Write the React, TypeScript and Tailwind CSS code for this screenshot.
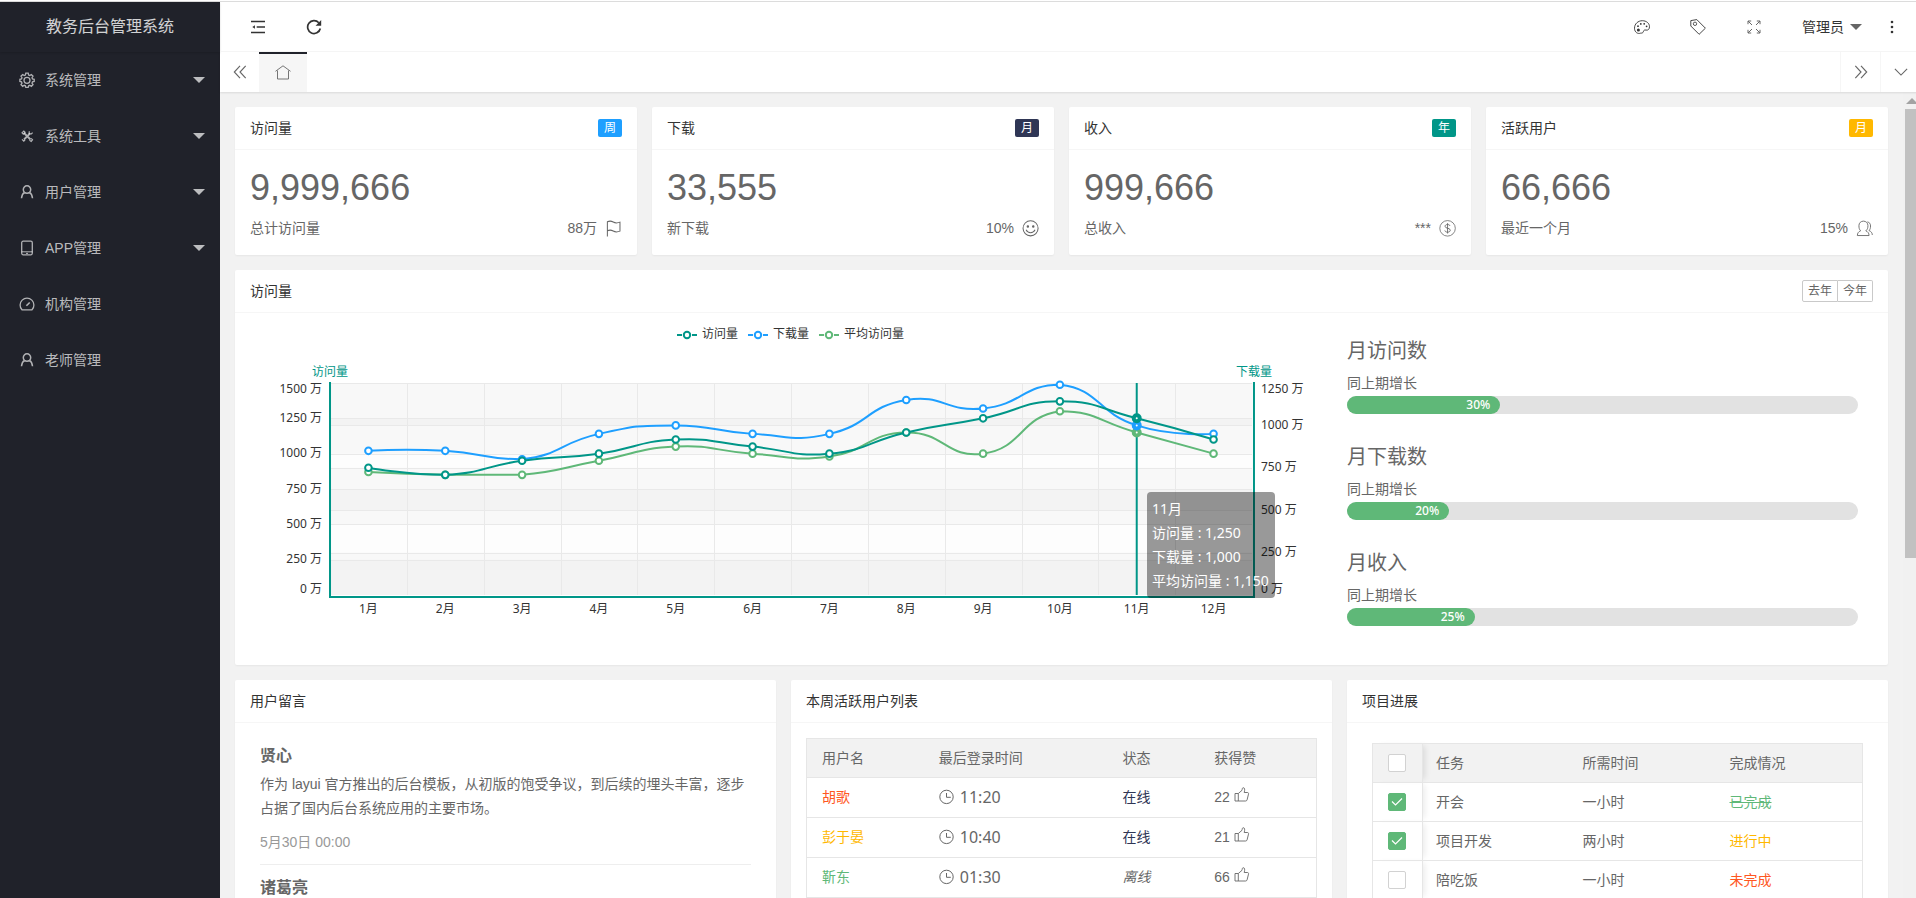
import { useState, type ReactNode } from "react";

const MENU = [
  { label: '系统管理', icon: 'gear', sub: true },
  { label: '系统工具', icon: 'tools', sub: true },
  { label: '用户管理', icon: 'user', sub: true },
  { label: 'APP管理', icon: 'phone', sub: true },
  { label: '机构管理', icon: 'dash', sub: false },
  { label: '老师管理', icon: 'user', sub: false },
];

const STATS = [
  { title: '访问量', badge: '周', color: 'bg-[#1E9FFF]', value: '9,999,666', label: '总计访问量', extra: '88万', icon: 'flag' },
  { title: '下载', badge: '月', color: 'bg-[#2F3655]', value: '33,555', label: '新下载', extra: '10%', icon: 'smile' },
  { title: '收入', badge: '年', color: 'bg-[#009688]', value: '999,666', label: '总收入', extra: '***', icon: 'dollar' },
  { title: '活跃用户', badge: '月', color: 'bg-[#FFB800]', value: '66,666', label: '最近一个月', extra: '15%', icon: 'users' },
];

const PROGRESS = [{ title: '月访问数', val: 30 }, { title: '月下载数', val: 20 }, { title: '月收入', val: 25 }];

const USERS = [
  { name: '胡歌', color: 'text-[#FF5722]', time: '11:20', online: true, likes: 22 },
  { name: '彭于晏', color: 'text-[#FFB800]', time: '10:40', online: true, likes: 21 },
  { name: '靳东', color: 'text-[#5FB878]', time: '01:30', online: false, likes: 66 },
];

const TASKS = [
  { name: '开会', time: '一小时', state: '已完成', cls: 'text-[#5FB878] line-through', done: true },
  { name: '项目开发', time: '两小时', state: '进行中', cls: 'text-[#FFB800]', done: true },
  { name: '陪吃饭', time: '一小时', state: '未完成', cls: 'text-[#FF5722]', done: false },
];

const ICONS: Record<string, ReactNode> = {
  gear: (
    <>
      <path d="M6.800 1.200h2.400l.4 1.800 1.200.5 1.500-1 1.700 1.700-1 1.500.5 1.200 1.700.4v2.200l-1.700.4-.5 1.200 1 1.500-1.700 1.700-1.500-1-1.200.5-.4 1.500H6.800l-.4-1.500-1.200-.5-1.500 1L2 12.600l1-1.500-.5-1.200L.9 9.500V7.300l1.600-.4L3 5.700 2 4.200l1.700-1.700 1.500 1 1.200-.5z" strokeWidth="1.300" />
      <circle cx="8" cy="8.300" r="3" strokeWidth="1.300" />
    </>
  ),
  tools: (
    <>
      <path d="M5 5l6.500 6.500M11 5.500l-6 6" strokeWidth="1.800" />
      <path d="M3 4.800l1.800-1.800 1.300 1.300-1.800 1.800zM10.300 3.300l-.2 2.300 2.300.3 1.200-1.300M3 11.300l1.800 1.800 1.300-1.300M10.500 12.200l1.700 1.200 1.300-1.700-1.300-1.300" strokeWidth="1.200" />
    </>
  ),
  user: <path d="M5.500 8.300a3.700 3.700 0 1 1 5 0M5.500 8.300C3.600 9.500 2.700 11.600 2.500 14.300M10.500 8.300c1.900 1.200 2.800 3.300 3 6M5.500 8.300c1.500 1.100 3.500 1.100 5 0" strokeWidth="1.500" />,
  phone: (
    <>
      <rect x="2.700" y="1.200" width="10.600" height="13.600" rx="1.500" strokeWidth="1.300" />
      <path d="M2.700 11.800h10.600M7 13.400h2" />
    </>
  ),
  dash: (
    <>
      <path d="M3 13.800A6.900 6.900 0 1 1 13 13.800z" strokeWidth="1.300" />
      <path d="M7.400 9.800l3.300-3.300" strokeWidth="1.600" />
    </>
  ),
  flag: <path d="M3 15.500V2.500c2-1 3.500-.8 5.200.2s3.600 1.100 6 .1v8c-2.400 1-4.300.9-6-.1s-3.200-1.200-5.200-.2" strokeWidth=".9" />,
  smile: (
    <>
      <circle cx="8.500" cy="8.300" r="6.700" strokeWidth=".9" />
      <circle cx="6.100" cy="6.600" r=".6" fill="currentColor" />
      <circle cx="10.900" cy="6.600" r=".6" fill="currentColor" />
      <path d="M4.500 9.600c1.700 3.400 6.300 3.400 8 0" strokeWidth=".9" />
    </>
  ),
  dollar: (
    <>
      <circle cx="8.500" cy="8.300" r="6.900" strokeWidth=".7" />
      <path d="M10.700 6.200C10.400 5.300 9.600 4.900 8.500 4.900c-1.300 0-2.200.6-2.200 1.600 0 2.400 4.600 1 4.600 3.500 0 1-1 1.700-2.400 1.700-1.300 0-2.200-.5-2.400-1.500M8.500 3.700v9.200" strokeWidth=".8" />
    </>
  ),
  users: (
    <path d="M5 10.500C3.100 11.300 2.100 12.600 2.100 14.700h10.400c0-2.100-1-3.400-2.900-4.200C11.100 9.300 11.500 7.900 11.500 5.900 11.500 3.500 9.800 1.900 7.500 1.900S3.500 3.500 3.500 5.900c0 2 .3 3.400 1.500 4.600M11 2.600c1.900.4 2.800 1.600 2.800 3.600 0 1.900-.4 3-1.300 4.100 1.900.8 2.800 2 2.900 3.900" strokeWidth=".8" />
  ),
  indent: (
    <>
      <path d="M0 1.700h16M6.500 8H16M0 14.300h16" strokeWidth="1.600" />
      <path d="M1.500 8l3-2v4z" fill="currentColor" stroke="none" />
    </>
  ),
  refresh: (
    <>
      <path d="M14.300 9.500A6.400 6.400 0 1 1 12.800 3.800" strokeWidth="1.700" />
      <path d="M15.200 1v5.800H9.600z" fill="currentColor" stroke="none" />
    </>
  ),
  left: <path d="M8 1L1.500 8 8 15M14.500 1L8 8l6.500 7" strokeWidth="1.300" />,
  right: <path d="M8 1l6.500 7L8 15M1.500 1L8 8l-6.500 7" strokeWidth="1.300" />,
  down: <path d="M1 4.500L8 11.500l7-7" strokeWidth="1.300" />,
  home: <path d="M.5 6.300L8 .8l7.500 5.500M2.500 5.500V14h11V5.500" strokeWidth=".9" />,
  palette: (
    <>
      <path d="M6.400 14.200c-2.600 1-5.900-.9-5.900-5C.5 4.900 4 1.700 8.300 1.700c4.100 0 7.200 2.600 7.200 6 0 2.500-1.600 3.800-3.400 3.400-1.600-.4-2.600.2-2.700 1.500-.1 1.200-1.600 1.600-3 1.600z" strokeWidth=".9" />
      <circle cx="4.400" cy="11" r="1.500" fill="currentColor" stroke="none" />
      <circle cx="4" cy="7.200" r=".9" fill="currentColor" stroke="none" />
      <circle cx="6.800" cy="4.900" r=".9" fill="currentColor" stroke="none" />
      <circle cx="10.200" cy="4.800" r=".9" fill="currentColor" stroke="none" />
      <circle cx="12.600" cy="7.300" r=".9" fill="currentColor" stroke="none" />
    </>
  ),
  tag: (
    <>
      <path d="M.8 1.600L6.800.6l8.600 8.600-6.300 6.100L.8 7z" strokeWidth=".9" />
      <circle cx="5" cy="4.800" r="1.700" strokeWidth=".8" />
    </>
  ),
  full: (
    <path d="M2 5.200V2h3.200M2 2l4 4M10.800 2H14v3.200M14 2l-4 4M2 10.800V14h3.200M2 14l4-4M14 10.800V14h-3.200M14 14l-4-4" strokeWidth="1" />
  ),
  clock: <path d="M7.500 1.200a6.700 6.700 0 1 0 0 13.400A6.700 6.700 0 1 0 7.500 1.200zM7.500 4v4.300h4.300" />,
  thumb: <path d="M4.300 6.500V14M1 6.500h3.300L8 3.300C8.300 2 8.200.7 9.300.7c1.500 0 1.700 2.200.9 4.800H13.500c1 0 1.200.8 1 1.600l-1.400 5.700c-.2.800-.7 1.200-1.500 1.200H1z" strokeWidth=".9" />,
};

function Icon({ name, className = 'w-4 h-4' }: { name: string; className?: string }) {
  return (
    <svg viewBox="0 0 16 16" fill="none" stroke="currentColor" className={`shrink-0 ${className}`}>
      {ICONS[name]}
    </svg>
  );
}

function Caret({ className = '' }: { className?: string }) {
  return (
    <svg viewBox="0 0 12 6" fill="currentColor" className={`w-3 h-1.5 ${className}`}>
      <path d="M0 0h12L6 6z" />
    </svg>
  );
}

function Card({ title, right, children }: { title: string; right?: ReactNode; children: ReactNode }) {
  return (
    <section className="bg-white rounded-xs shadow-[0_1px_2px_rgba(0,0,0,0.05)]">
      <div className="flex items-center justify-between h-[43px] px-[15px] border-b border-[#f6f6f6]">
        <h2 className="text-[#333]">{title}</h2>
        {right}
      </div>
      {children}
    </section>
  );
}

// Chart geometry
const W = 1082;
const X0 = 80, X1 = 1002, Y0 = 60, Y1 = 272;
const STEP = (X1 - X0) / 12;
const ACTIVE = 10;

const SERIES = [
  { name: '平均访问量', color: '#5FB878', max: 1500, lx: 569, data: [870, 850, 850, 950, 1050, 1000, 980, 1150, 1000, 1300, 1150, 1000] },
  { name: '下载量', color: '#1E9FFF', max: 1250, lx: 498, data: [850, 850, 800, 950, 1000, 950, 950, 1150, 1100, 1240, 1000, 950] },
  { name: '访问量', color: '#009688', max: 1500, lx: 427, data: [900, 850, 950, 1000, 1100, 1050, 1000, 1150, 1250, 1370, 1250, 1100] },
];

type Pt = [number, number];

const toPoints = (data: number[], max: number): Pt[] =>
  data.map((v, i) => [X0 + STEP * (i + 0.5), Y1 - (v / max) * (Y1 - Y0)]);

// Bezier smoothing, control points kept inside the series' own bounds
function smooth(pts: Pt[]) {
  const ys = pts.map(p => p[1]);
  const lo = Math.min(...ys), hi = Math.max(...ys);
  const clamp = (y: number) => Math.max(lo, Math.min(hi, y));
  const cps = pts.map((p, i) => {
    if (i === 0 || i === pts.length - 1) return [p, p];
    const a = pts[i - 1], b = pts[i + 1];
    const vx = (b[0] - a[0]) * 0.5, vy = (b[1] - a[1]) * 0.5;
    const d0 = Math.hypot(p[0] - a[0], p[1] - a[1]), d1 = Math.hypot(p[0] - b[0], p[1] - b[1]);
    const k0 = d0 / (d0 + d1), k1 = d1 / (d0 + d1);
    return [[p[0] - vx * k0, clamp(p[1] - vy * k0)], [p[0] + vx * k1, clamp(p[1] + vy * k1)]];
  });
  let d = `M${pts[0]}`;
  for (let i = 1; i < pts.length; i++) d += `C${cps[i - 1][1]} ${cps[i][0]} ${pts[i]}`;
  return d;
}

// The labels at both ends of an axis are pulled inside it
const labelY = (i: number, n: number) => {
  const y = Math.floor(Y1 - ((Y1 - Y0) * i) / n);
  return i === 0 ? y - 6 : i === n ? y + 6 : y;
};

function Chart() {
  const h = Y1 - Y0;
  const ax = X0 + STEP * (ACTIVE + 0.5);
  return (
    <div className="relative">
      <svg viewBox={`0 0 ${W} 332`} className="w-full block font-['Noto_Sans','Noto_Sans_CJK_SC',sans-serif]" fontSize="12" fill="#333">
        <rect x={X0} y={Y0} width={X1 - X0} height={h} fill="#fdfdfd" />
        {[6, 5].map(n => Array.from({ length: Math.ceil(n / 2) }, (_, i) => (
          <rect key={`${n}-${i}`} x={X0} y={Y1 - (h * (2 * i + 1)) / n} width={X1 - X0} height={h / n} fill="rgba(160,160,160,0.055)" />
        )))}
        <g stroke="#e9e9e9" shapeRendering="crispEdges">
          {[6, 5].map(n => Array.from({ length: n }, (_, i) => {
            const y = Math.round(Y0 + (h * i) / n) + 0.5;
            return <line key={`${n}-${i}`} x1={X0} x2={X1} y1={y} y2={y} />;
          }))}
          {Array.from({ length: 11 }, (_, i) => {
            const x = Math.round(X0 + STEP * (i + 1)) + 0.5;
            return <line key={i} x1={x} x2={x} y1={Y0} y2={Y1} />;
          })}
        </g>
        <path d={`M${X0} ${Y0 - 1}V${Y1 + 2}H${X1 + 2}V${Y0 - 1}`} fill="none" stroke="#009688" strokeWidth="2" />
        <line x1={ax} x2={ax} y1={Y0} y2={Y1} stroke="#009688" strokeWidth="2" />

        {SERIES.map(s => {
          const pts = toPoints(s.data, s.max);
          return (
            <g key={s.name} stroke={s.color} strokeWidth="2">
              <path d={smooth(pts)} fill="none" />
              {pts.map(([x, y], i) => (
                <circle key={i} cx={x} cy={y} r={i === ACTIVE ? 3 : 3.3} fill="#fff" strokeWidth={i === ACTIVE ? 4 : 2} />
              ))}
              <path d={`M${s.lx} 12h5M${s.lx + 15} 12h5`} />
              <circle cx={s.lx + 10} cy={12} r="3.2" fill="#fff" />
            </g>
          );
        })}
        {SERIES.map(s => <text key={s.name} x={s.lx + 25} y="15">{s.name}</text>)}

        <g fill="#009688" textAnchor="middle">
          <text x={X0} y="53">访问量</text>
          <text x={X1 + 2} y="53">下载量</text>
        </g>
        {Array.from({ length: 7 }, (_, i) => (
          <text key={i} x={X0 - 8} y={labelY(i, 6) + 4} textAnchor="end">{i * 250} 万</text>
        ))}
        {Array.from({ length: 6 }, (_, i) => (
          <text key={i} x={X1 + 9} y={labelY(i, 5) + 4}>{i * 250} 万</text>
        ))}
        {Array.from({ length: 12 }, (_, i) => (
          <text key={i} x={X0 + STEP * (i + 0.5)} y="290" textAnchor="middle">{i + 1}月</text>
        ))}
      </svg>
      {/* Tooltip */}
      <div className="absolute left-[897px] top-[169px] p-[5px] w-32 rounded bg-black/40 text-white text-sm leading-6 whitespace-nowrap font-['Noto_Sans','Noto_Sans_CJK_SC',sans-serif]">
        <div>11月</div>
        <div>访问量 : 1,250</div>
        <div>下载量 : 1,000</div>
        <div>平均访问量 : 1,150</div>
      </div>
    </div>
  );
}

function Checkbox({ label, checked, onChange }: { label: string; checked: boolean; onChange: () => void }) {
  return (
    <label className="relative block w-[18px] h-[18px]">
      <input type="checkbox" aria-label={label} checked={checked} onChange={onChange}
        className="block appearance-none w-[18px] h-[18px] rounded-xs border border-[#d2d2d2] bg-white checked:border-[#5FB878] checked:bg-[#5FB878]" />
      {checked && (
        <svg viewBox="0 0 18 18" fill="none" stroke="#fff" strokeWidth="1.2" className="absolute inset-0 pointer-events-none">
          <path d="M4 8.500L7.500 12 14 5.500" />
        </svg>
      )}
    </label>
  );
}

export default function App() {
  const [done, setDone] = useState(TASKS.map(t => t.done));
  const allDone = done.every(Boolean);

  return (
    <div className="h-screen overflow-hidden flex flex-col bg-white text-sm text-[#666] font-['Liberation_Sans','Noto_Sans_CJK_SC',sans-serif]">
      <div className="h-0.5 shrink-0 border-b border-[#dcdcdc]" />
      <div className="flex flex-1 min-h-0">
        {/* Sidebar */}
        <aside className="w-[220px] shrink-0 bg-[#20222A] text-white/70">
          <div className="h-[50px] flex items-center justify-center text-base text-white/80 shadow-[0_1px_2px_rgba(0,0,0,0.15)]">教务后台管理系统</div>
          <nav>
            {MENU.map(m => (
              <a key={m.label} href="#" className="flex items-center h-14 pl-[19px] pr-[15px]">
                <Icon name={m.icon} className="w-4 h-4 text-white/65" />
                <span className="ml-2.5 flex-1">{m.label}</span>
                {m.sub && <Caret />}
              </a>
            ))}
          </nav>
        </aside>

        <div className="flex-1 min-w-0 flex flex-col -mr-1">
          {/* Header */}
          <header className="h-[50px] shrink-0 flex items-center justify-between border-b border-[#f6f6f6] text-[#333]">
            <div className="flex items-center pl-[30px] gap-10">
              <button aria-label="侧边伸缩"><Icon name="indent" className="block w-4 h-3.5" /></button>
              <button aria-label="刷新"><Icon name="refresh" className="block w-4 h-4" /></button>
            </div>
            <div className="flex items-center pr-[26px]">
              <button aria-label="主题" className="w-14"><Icon name="palette" className="block w-4 h-4 mx-auto" /></button>
              <button aria-label="便签" className="w-14"><Icon name="tag" className="block w-4 h-4 mx-auto" /></button>
              <button aria-label="全屏" className="w-14 text-[#666]"><Icon name="full" className="block w-4 h-4 mx-auto" /></button>
              <button className="flex items-center gap-1.5 ml-5">管理员<Caret className="text-[#666]" /></button>
              <button aria-label="更多" className="ml-7">
                <svg viewBox="0 0 4 14" fill="currentColor" className="block w-1 h-3.5">
                  <circle cx="2" cy="2" r="1.300" /><circle cx="2" cy="7" r="1.300" /><circle cx="2" cy="12" r="1.300" />
                </svg>
              </button>
            </div>
          </header>

          {/* Page tabs */}
          <div className="relative h-10 shrink-0 flex shadow-[0_1px_2px_rgba(0,0,0,0.1)]">
            <button aria-label="向左" className="w-[39px] grid place-items-center"><Icon name="left" className="w-3.5 h-3.5" /></button>
            <button aria-label="主页" className="w-12 grid place-items-center bg-[#f6f6f6] border-t-2 border-[#20222A]"><Icon name="home" /></button>
            <div className="flex-1" />
            <button aria-label="向右" className="w-10 grid place-items-center border-l border-[#f6f6f6]"><Icon name="right" className="w-3.5 h-3.5" /></button>
            <button aria-label="标签操作" className="w-10 grid place-items-center border-l border-[#f6f6f6]"><Icon name="down" className="w-3.5 h-3.5" /></button>
          </div>

          <div className="flex flex-1 min-h-0 bg-[#f2f2f2]">
            <main className="flex-1 min-w-0 p-[15px] overflow-hidden space-y-[15px]">
              {/* Stats */}
              <div className="grid grid-cols-4 gap-[15px]">
                {STATS.map(s => (
                  <Card key={s.title} title={s.title} right={<span className={`${s.color} rounded-xs px-1.5 text-xs leading-[18px] text-white`}>{s.badge}</span>}>
                    <div className="p-[15px]">
                      <p className="h-[51px] pt-[5px] text-4xl leading-9">{s.value}</p>
                      <p className="flex items-center leading-6">
                        <span className="flex-1">{s.label}</span>
                        {s.extra}
                        <Icon name={s.icon} className="ml-[7px] w-[18px] h-[18px]" />
                      </p>
                    </div>
                  </Card>
                ))}
              </div>

              {/* Chart and growth */}
              <Card title="访问量" right={
                <div className="flex text-xs leading-5">
                  <button className="border border-[#c9c9c9] rounded-l-xs px-[5px]">去年</button>
                  <button className="border border-l-0 border-[#c9c9c9] rounded-r-xs px-[5px]">今年</button>
                </div>
              }>
                <div className="flex px-[15px] py-2.5">
                  <div className="w-2/3"><Chart /></div>
                  <div className="w-1/3 px-[15px] pt-[13px] space-y-7">
                    {PROGRESS.map(p => (
                      <div key={p.title}>
                        <h3 className="text-xl leading-[30px] mb-[5px]">{p.title}</h3>
                        <p className="leading-[25px]">同上期增长</p>
                        <div className="h-[18px] rounded-full bg-[#e2e2e2]">
                          <div className="h-[18px] rounded-full bg-[#5FB878] pr-2.5 text-right text-xs leading-[18px] text-white font-medium font-['Noto_Sans',sans-serif]" style={{ width: `${p.val}%` }}>{p.val}%</div>
                        </div>
                      </div>
                    ))}
                  </div>
                </div>
              </Card>

              <div className="grid grid-cols-3 gap-[15px]">
                {/* Messages */}
                <Card title="用户留言">
                  <ul className="px-[25px] pt-2.5">
                    <li className="pt-[11px] pb-2.5 border-b border-[#eee]">
                      <h3 className="text-base leading-6 font-bold">贤心</h3>
                      <p className="mt-1 leading-6">作为 layui 官方推出的后台模板，从初版的饱受争议，到后续的埋头丰富，逐步占据了国内后台系统应用的主要市场。</p>
                      <p className="mt-2.5 leading-6 text-[#999]">5月30日 00:00</p>
                    </li>
                    <li className="pt-[11px] pb-2.5">
                      <h3 className="text-base leading-6 font-bold">诸葛亮</h3>
                    </li>
                  </ul>
                </Card>

                {/* Active users */}
                <Card title="本周活跃用户列表">
                  <div className="p-[15px]">
                    <table className="w-full table-fixed border-collapse border border-[#e6e6e6] text-left">
                      <thead className="bg-[#f2f2f2]">
                        <tr className="h-[39px]">
                          <th className="w-[23%] px-[15px] font-normal">用户名</th>
                          <th className="w-[36%] px-[15px] font-normal">最后登录时间</th>
                          <th className="w-[18%] px-[15px] font-normal">状态</th>
                          <th className="px-[15px] font-normal">获得赞</th>
                        </tr>
                      </thead>
                      <tbody>
                        {USERS.map(u => (
                          <tr key={u.name} className="h-10 border-t border-[#e6e6e6]">
                            <td className={`px-[15px] ${u.color}`}>{u.name}</td>
                            <td className="px-[15px]">
                              <span className="flex items-center gap-[5px] text-base leading-5 font-['Noto_Sans',sans-serif]"><Icon name="clock" />{u.time}</span>
                            </td>
                            <td className="px-[15px]">{u.online ? <span className="text-[#2F3655]">在线</span> : <i>离线</i>}</td>
                            <td className="px-[15px]"><span className="flex gap-1 leading-5">{u.likes}<Icon name="thumb" /></span></td>
                          </tr>
                        ))}
                      </tbody>
                    </table>
                  </div>
                </Card>

                {/* Tasks */}
                <Card title="项目进展">
                  <div className="px-[25px] pt-5">
                    <table className="w-full table-fixed border-collapse border border-[#e6e6e6] text-left">
                      <thead className="bg-[#f2f2f2]">
                        <tr className="h-[39px]">
                          <th className="w-[50px] pl-[15px] border-r border-[#e6e6e6] shadow-[5px_0_6px_-3px_rgba(0,0,0,0.1)]">
                            <Checkbox label="全选" checked={allDone} onChange={() => setDone(done.map(() => !allDone))} />
                          </th>
                          <th className="w-[30%] px-[13px] font-normal">任务</th>
                          <th className="w-[30%] px-[13px] font-normal">所需时间</th>
                          <th className="px-[13px] font-normal">完成情况</th>
                        </tr>
                      </thead>
                      <tbody>
                        {TASKS.map((t, i) => (
                          <tr key={t.name} className="h-[39px] border-t border-[#e6e6e6]">
                            <td className="pl-[15px] border-r border-[#e6e6e6] shadow-[5px_0_6px_-3px_rgba(0,0,0,0.08)]">
                              <Checkbox label={t.name} checked={done[i]} onChange={() => setDone(done.map((d, j) => (j === i ? !d : d)))} />
                            </td>
                            <td className="px-[13px]">{t.name}</td>
                            <td className="px-[13px]">{t.time}</td>
                            <td className="px-[13px]"><span className={t.cls}>{t.state}</span></td>
                          </tr>
                        ))}
                      </tbody>
                    </table>
                  </div>
                </Card>
              </div>
            </main>

            {/* Scrollbar */}
            <div className="w-[17px] shrink-0 bg-[#f1f1f1] px-0.5">
              <div className="h-[17px] grid place-items-center text-[#a3a3a3]"><Caret className="w-2 h-1 rotate-180" /></div>
              <div className="h-[449px] bg-[#c1c1c1]" />
            </div>
          </div>
        </div>
      </div>
    </div>
  );
}
